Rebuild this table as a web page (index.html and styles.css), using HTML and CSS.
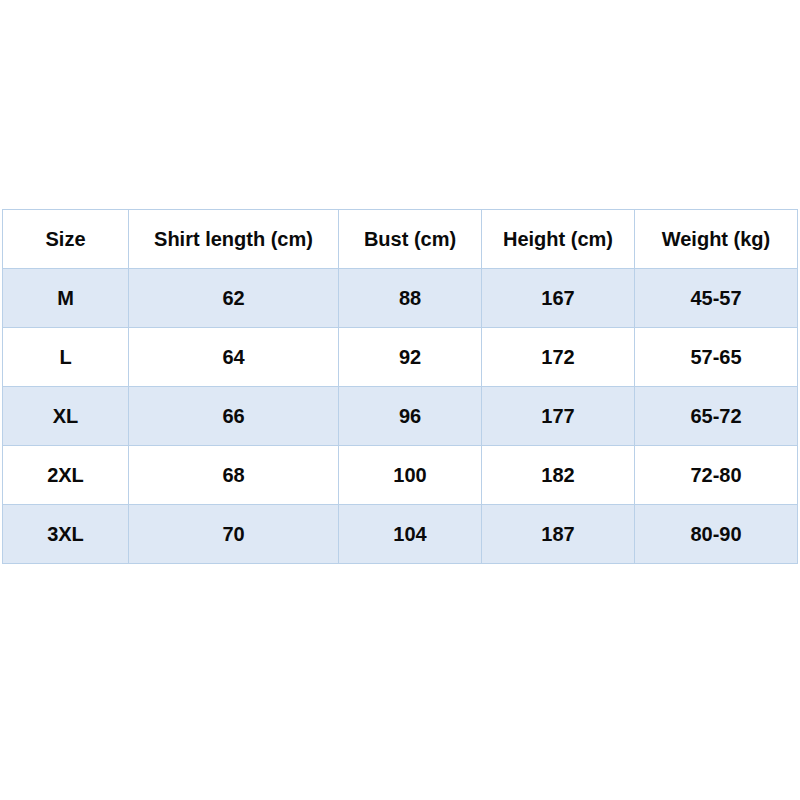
FILE: index.html
```html
<!DOCTYPE html>
<html>
<head>
<meta charset="utf-8">
<link rel="stylesheet" href="styles.css">
</head>
<body>
<div class="page">
<table class="size-table">
<colgroup>
<col class="c1"><col class="c2"><col class="c3"><col class="c4"><col class="c5">
</colgroup>
<tr class="head"><td>Size</td><td>Shirt length (cm)</td><td>Bust (cm)</td><td>Height (cm)</td><td>Weight (kg)</td></tr>
<tr class="alt"><td>M</td><td>62</td><td>88</td><td>167</td><td>45-57</td></tr>
<tr><td>L</td><td>64</td><td>92</td><td>172</td><td>57-65</td></tr>
<tr class="alt"><td>XL</td><td>66</td><td>96</td><td>177</td><td>65-72</td></tr>
<tr><td>2XL</td><td>68</td><td>100</td><td>182</td><td>72-80</td></tr>
<tr class="alt"><td>3XL</td><td>70</td><td>104</td><td>187</td><td>80-90</td></tr>
</table>
</div>
</body>
</html>
```
FILE: styles.css
```css
html, body {
  margin: 0;
  padding: 0;
  background: #ffffff;
}
.page {
  padding: 209px 0 0 2px;
}
.size-table {
  border-collapse: collapse;
  table-layout: fixed;
  width: 795px;
  font-family: "Liberation Sans", Arial, sans-serif;
  font-weight: bold;
  font-size: 20px;
  color: #0a0a0a;
}
.c1 { width: 126px; }
.c2 { width: 210px; }
.c3 { width: 143px; }
.c4 { width: 153px; }
.c5 { width: 163px; }
.size-table td {
  border: 1px solid #b9d0e8;
  height: 58px;
  padding: 0;
  text-align: center;
  vertical-align: middle;
}
.size-table tr.alt td {
  background: #dee8f5;
}
```
